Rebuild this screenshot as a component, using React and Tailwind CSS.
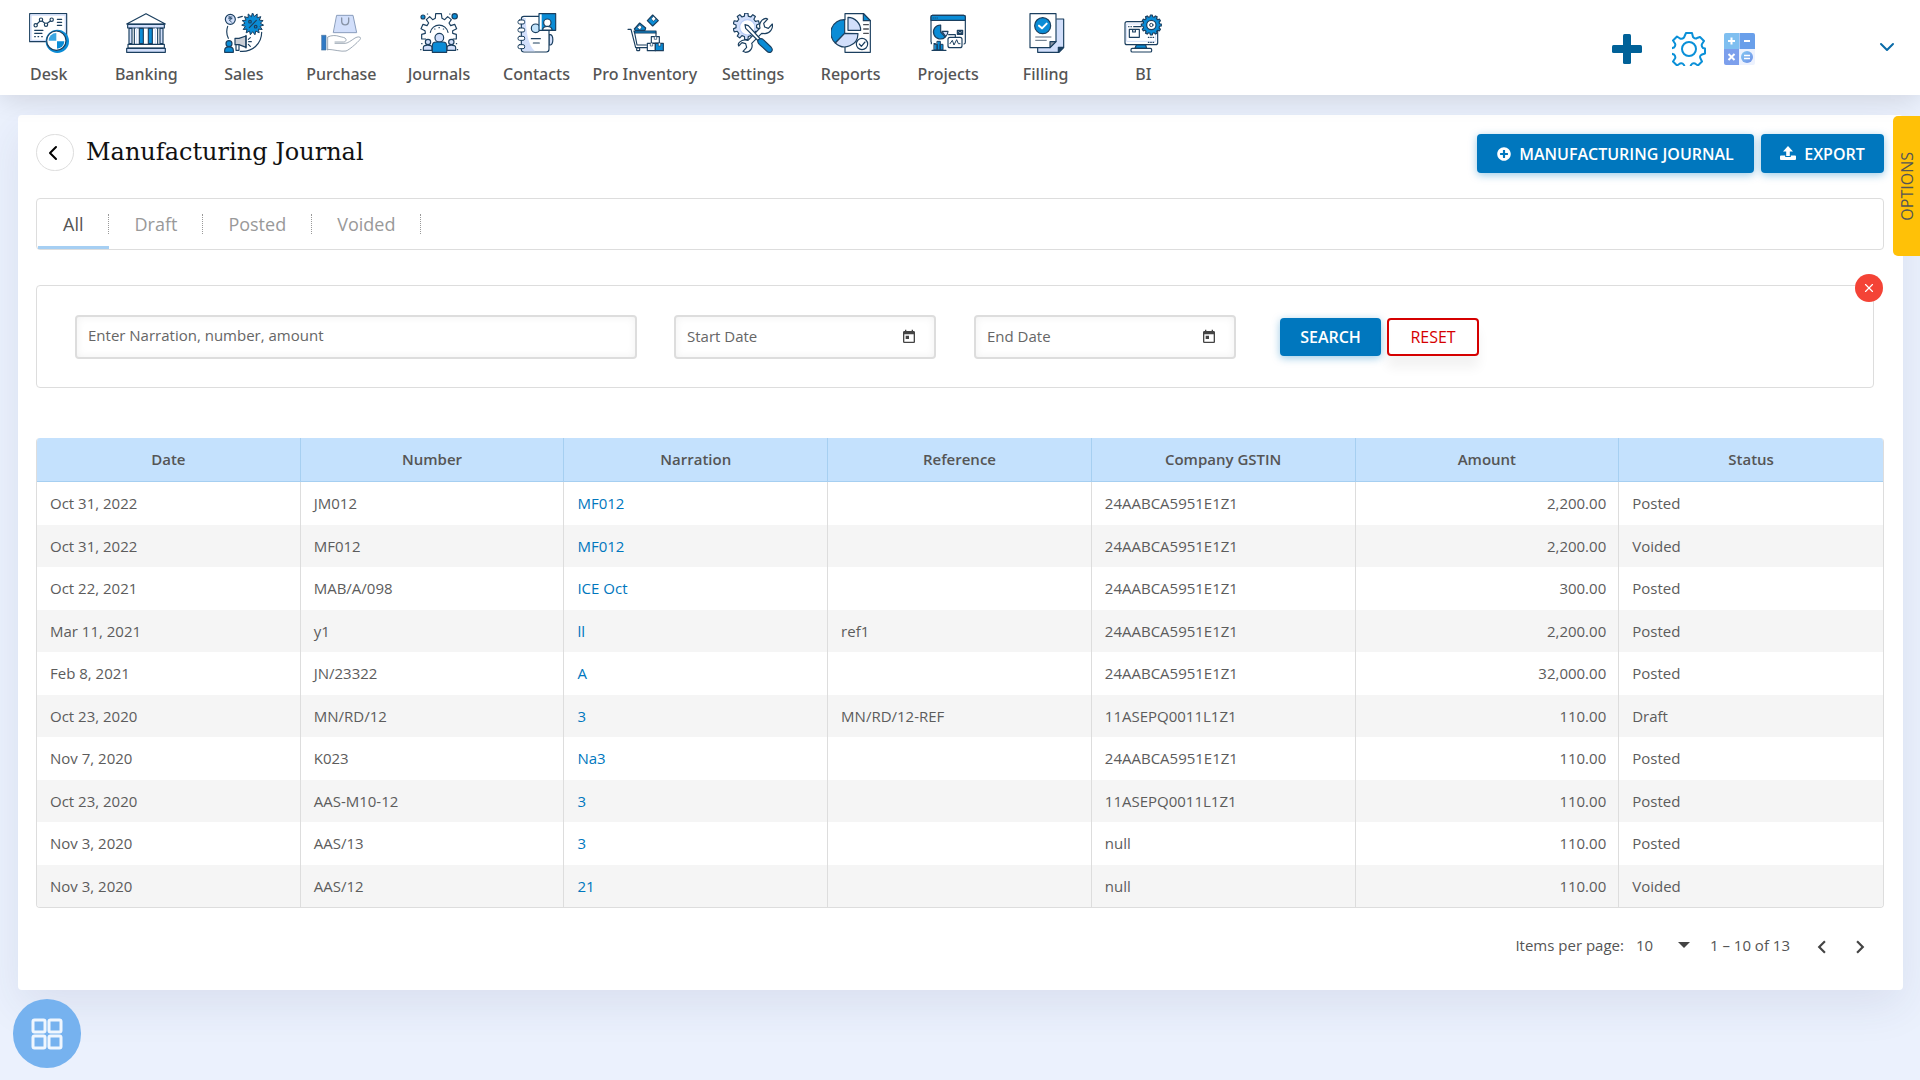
import React, { useState } from 'react';
import { ChevronDown, ChevronLeft, X } from 'lucide-react';
import { FaPlusCircle } from 'react-icons/fa';
import { MdChevronLeft, MdChevronRight, MdToday } from 'react-icons/md';

const NAVY = '#1b3f5f';
const BLUE = '#0a8cd6';
const LILAC = '#d2dffb';

// star with n spikes, used for the discount badge
const starPoints = (cx, cy, n, outer, inner) => {
  const pts = [];
  for (let i = 0; i < n * 2; i++) {
    const r = i % 2 === 0 ? outer : inner;
    const a = (Math.PI * i) / n - Math.PI / 2;
    pts.push(`${(cx + r * Math.cos(a)).toFixed(1)},${(cy + r * Math.sin(a)).toFixed(1)}`);
  }
  return pts.join(' ');
};

// cog outline with n flat teeth
const gearPoints = (cx, cy, n, outer, inner) => {
  const pts = [];
  const step = (Math.PI * 2) / n;
  for (let i = 0; i < n; i++) {
    const mid = i * step - Math.PI / 2;
    [[-0.3, inner], [-0.19, outer], [0.19, outer], [0.3, inner]].forEach(([k, r]) => {
      const a = mid + k * step;
      pts.push(`${(cx + r * Math.cos(a)).toFixed(1)},${(cy + r * Math.sin(a)).toFixed(1)}`);
    });
  }
  return pts.join(' ');
};

const NavIcon = ({ children }) => (
  <svg viewBox="0 0 120 120" className="w-10 h-10" fill="none" stroke={NAVY} strokeWidth="3.5" strokeLinejoin="round" strokeLinecap="round" aria-hidden="true">
    {children}
  </svg>
);

const DeskIcon = () => (
  <NavIcon>
    <rect x="2" y="2" width="111" height="84" fill="#fff" />
    <rect x="6" y="6" width="103" height="76" stroke={LILAC} strokeWidth="4" />
    <path d="M20 37l16-16 15 13 17-13" />
    <g fill="#fff">
      <circle cx="20" cy="37" r="5" />
      <circle cx="36" cy="20" r="5" />
      <circle cx="51" cy="35" r="5" />
      <circle cx="68" cy="20" r="5" />
    </g>
    <path d="M85 19h13M85 28h13M85 37h13M17 52h25M17 61h22M17 71h2M27 71h2M38 71h2" />
    <circle cx="85" cy="85" r="35" fill={BLUE} stroke="none" />
    <circle cx="82" cy="83" r="29" fill="#fff" />
    <path d="M82 83H59a23 23 0 0 1 23-23z" fill="#3aa6e2" stroke="none" />
    <path d="M84 85h22a22 22 0 0 1-22 22z" fill={BLUE} stroke="none" />
  </NavIcon>
);

const BankingIcon = () => (
  <NavIcon>
    <path d="M2 33L60 2l58 31z" fill="#fff" />
    <path d="M5 34h110v11H5z" fill={LILAC} />
    <path d="M9 46h9v46H9zM102 46h9v46h-9z" fill={LILAC} />
    <path d="M25 46v46M95 46v46" />
    <path d="M40 46h12v46H40zM67 46h12v46H67z" fill={BLUE} />
    <path d="M32 46v46M88 46v46" stroke={LILAC} />
    <path d="M6 94h109v11H6z" fill="#fff" />
    <path d="M2 106h116v12H2z" fill={LILAC} />
  </NavIcon>
);

const SalesIcon = () => (
  <NavIcon>
    <circle cx="19" cy="19" r="15" fill={LILAC} />
    <path d="M14 12h10M14 17h10M16 12c8 0 8 9 0 9l7 7" strokeWidth="2.5" />
    <path d="M42 14l13-4M11 40c-4 12-4 24 2 36M113 58c0 34-28 60-64 57" />
    <polygon points={starPoints(86, 33, 15, 33, 23)} fill={BLUE} strokeWidth="3" />
    <path d="M97 22L76 44" />
    <circle cx="78" cy="26" r="4" />
    <circle cx="95" cy="41" r="4" />
    <circle cx="15" cy="92" r="9" fill={BLUE} />
    <path d="M2 118v-6c0-14 26-14 26 0v6z" fill={BLUE} />
    <path d="M33 76h12l21-7v34l-21-8H33z" fill="#cbcfd6" />
    <path d="M66 67v38M36 95h9v17h-9z" fill="#fff" />
    <path d="M73 79l6-5M74 86h8M73 94l6 6" />
  </NavIcon>
);

const PurchaseIcon = () => (
  <NavIcon>
    <path d="M48 7h48l11 52H38z" fill={LILAC} stroke="#8a9dbc" strokeWidth="3" />
    <path d="M62 15v10c0 14 21 14 21 0V15" stroke="#8793a6" strokeWidth="4" />
    <path d="M2 67h13v44H2z" fill="#2f79c4" stroke="#41709f" strokeWidth="2" />
    <g stroke="#8d9aa8" strokeWidth="2.5">
      <path d="M20 111V72c12-6 26-5 34-2 8 3 19 2 21 9 1 5-3 8-8 8H42" />
      <path d="M42 91h30c8 0 18-8 30-16 8-5 17-4 17 1 0 4-32 34-44 38-14 3-38-5-55-5" />
    </g>
  </NavIcon>
);

const JournalsIcon = () => (
  <NavIcon>
    <path d="M20 78H8V64l11-3-1-8-12-6 6-13 12 4 5-8-7-10 10-9 9 9 8-4 1-14h17l2 14 8 4 9-9 11 9-7 10 5 8 12-4 6 13-12 6v8l11 3v14h-10" />
    <path d="M34 58a27 27 0 0 1 53 0" />
    <circle cx="12" cy="12" r="6" fill={BLUE} />
    <circle cx="107" cy="10" r="8" fill={BLUE} />
    <path d="M47 48h1M60 44h1M73 48h1M5 110h1M115 110h1M8 92h1M112 92h1M25 3h1M92 3h1" />
    <circle cx="27" cy="87" r="8" fill={LILAC} />
    <path d="M13 112v-8c0-10 26-10 26 0v8z" fill={LILAC} />
    <circle cx="97" cy="87" r="8" fill={LILAC} />
    <path d="M84 112v-8c0-10 26-10 26 0v8z" fill={LILAC} />
    <circle cx="61" cy="74" r="13" fill={LILAC} />
    <path d="M40 118v-20c0-8 5-11 12-11h19c7 0 12 3 12 11v20z" fill={BLUE} />
  </NavIcon>
);

const ContactsIcon = () => (
  <NavIcon>
    <path d="M96 65h4c10 2 10 28 0 31h-4z" fill={LILAC} />
    <path d="M13 18c0-5 3-8 8-8h67c4 0 8 3 8 8v91c0 5-4 8-8 8H21c-5 0-8-3-8-8z" fill="#fff" />
    <path d="M15 15h11c2 40 6 80 28 100H22c-4 0-7-3-7-7z" fill={LILAC} stroke="none" />
    <circle cx="56" cy="46" r="13" fill="#c3e4fb" />
    <path d="M66 2h50v50H66z" fill={BLUE} />
    <path d="M68 4h6v46h-6z" fill="#fff" stroke="none" />
    <circle cx="91" cy="29" r="11" fill="#fff" />
    <path d="M77 51c0-14 28-14 28 0z" fill="#fff" />
    <g fill="#fff" strokeWidth="3">
      <rect x="3" y="21" width="20" height="12" rx="5" />
      <rect x="3" y="45" width="20" height="12" rx="5" />
      <rect x="3" y="70" width="20" height="12" rx="5" />
      <rect x="3" y="95" width="20" height="12" rx="5" />
    </g>
    <path d="M43 77h27M49 90h18" />
  </NavIcon>
);

const InventoryIcon = () => (
  <NavIcon>
    <path d="M9 49h9l14 55h34" />
    <path d="M27 54h66v6H29z" fill={BLUE} />
    <path d="M29 60l7 36h28M93 60v10" />
    <path d="M83 6l17 17-17 16-16-16z" fill={BLUE} />
    <path d="M86 10l7 8-8 7-6-7z" fill="#fff" strokeWidth="2" />
    <path d="M31 52l-3-4 16-18 18 15-2 7z" fill={BLUE} />
    <path d="M37 43l7-7 7 6-6 8z" fill="#fff" strokeWidth="2" />
    <rect x="35" y="105" width="9" height="8" rx="2" fill="#fff" />
    <path d="M79 71h24v19H79zM67 91h24v22H67z" fill="#fff" />
    <path d="M91 91h24v22H91z" fill={BLUE} />
    <path d="M88 71v8h7v-8M76 91v8h7v-8M100 91v8h7v-8" fill="#fff" strokeWidth="2" />
  </NavIcon>
);

const SettingsIcon = () => (
  <NavIcon>
    <polygon points={gearPoints(40, 40, 10, 40, 31)} fill={LILAC} />
    <circle cx="43" cy="43" r="23" fill="#fff" stroke="#b9cdf7" />
    <path d="M19 88c7-7 17-9 26-6l36-37c-4-12 4-27 18-29l5 2-12 13 3 11 11 4 12-13c3 13-7 28-22 29l-10-1-30 30c5 12-4 27-19 27l-7-3 11-12-3-11-11-3-10 10c-2-4-1-8 2-11z" fill="#fff" />
    <path d="M36 35l10 3 36 40-6 6-38-38z" fill="#fff" />
    <path d="M76 80c5-4 11-4 15 0l23 22c5 6 5 11 1 14s-9 3-14-2L79 94c-4-4-6-10-3-14z" fill={BLUE} />
  </NavIcon>
);

const ReportsIcon = () => (
  <NavIcon>
    <path d="M42 2h56l20 21v95H42z" fill="#fff" />
    <path d="M97 2l21 21H97z" fill={BLUE} />
    <circle cx="41" cy="61" r="40" fill="#fff" stroke="none" />
    <path d="M41 61V20a40 40 0 0 0-28 70z" fill={BLUE} />
    <path d="M41 61L13 90a40 40 0 0 0 68-28z" fill={LILAC} />
    <path d="M51 52V13a39 39 0 0 1 38 39z" fill={LILAC} />
    <path d="M98 35h14M98 48h14M98 61h14" strokeWidth="4" stroke="#4c4f55" />
    <circle cx="93" cy="93" r="17" fill="#fff" />
    <path d="M85 93l6 7 11-13" />
  </NavIcon>
);

const ProjectsIcon = () => (
  <NavIcon>
    <path d="M9 86V12c0-3 1-5 4-5h94c3 0 5 2 5 5v76c0 3-1 5-4 5" />
    <path d="M9 22V12c0-3 1-5 4-5h94c3 0 5 2 5 5v10z" fill={BLUE} />
    <path d="M15 15h1M21 15h1M27 15h1" strokeWidth="3" />
    <path d="M38 57V36a21 21 0 1 0 14 36z" fill={BLUE} />
    <path d="M42 55h18c0 8-3 12-7 16z" fill={LILAC} />
    <path d="M62 65h20v9M10 88v4M18 92h4" />
    <path d="M88 52h16v12H88z" fill={NAVY} />
    <path d="M92 56l4 4 5-4" stroke="#fff" strokeWidth="1.5" />
    <rect x="60" y="73" width="42" height="31" rx="6" fill="#fff" />
    <path d="M66 92l7-10 5 14 8-16 5 12h5" strokeWidth="3" />
    <path d="M19 94h9v17h-9zM28 85h9v26h-9zM37 94h8v17h-8z" fill={BLUE} strokeWidth="3" />
    <path d="M12 112h42" />
  </NavIcon>
);

const FillingIcon = () => (
  <NavIcon>
    <path d="M92 18h21v86l-14 14H35v-12" fill={LILAC} />
    <path d="M97 118v-15h15z" fill={NAVY} />
    <path d="M12 2h78v84l-18 18H12z" fill="#fff" />
    <path d="M72 104V86h18z" fill="#8b95a3" />
    <circle cx="50" cy="38" r="24" fill={BLUE} />
    <path d="M39 38l9 8 14-14" stroke="#fff" strokeWidth="6" />
    <path d="M29 72h46M29 82h32" stroke="#5a6b7e" strokeWidth="3" />
  </NavIcon>
);

const BiIcon = () => (
  <NavIcon>
    <rect x="6" y="26" width="98" height="69" rx="6" fill="#fff" />
    <rect x="12" y="33" width="86" height="52" stroke={LILAC} strokeWidth="3" />
    <path d="M17 41h1M24 41h1M32 41h22M19 49h30v24H19zM29 49v8h8v-8" />
    <path d="M76 73h2M83 73h2M90 73h2M76 88h2M83 88h2M90 88h2" />
    <polygon points={gearPoints(85, 36, 12, 30, 25)} fill={BLUE} />
    <circle cx="85" cy="36" r="14" fill="#fff" />
    <circle cx="85" cy="36" r="5" strokeWidth="3" />
    <path d="M40 96h28l3 10H36z" fill={BLUE} />
    <rect x="24" y="106" width="62" height="11" rx="4" fill="#fff" />
  </NavIcon>
);

const navItems = [
  { label: 'Desk', icon: DeskIcon },
  { label: 'Banking', icon: BankingIcon },
  { label: 'Sales', icon: SalesIcon },
  { label: 'Purchase', icon: PurchaseIcon },
  { label: 'Journals', icon: JournalsIcon },
  { label: 'Contacts', icon: ContactsIcon },
  { label: 'Pro Inventory', icon: InventoryIcon, wide: true },
  { label: 'Settings', icon: SettingsIcon },
  { label: 'Reports', icon: ReportsIcon },
  { label: 'Projects', icon: ProjectsIcon },
  { label: 'Filling', icon: FillingIcon },
  { label: 'BI', icon: BiIcon },
];

const tabs = ['All', 'Draft', 'Posted', 'Voided'];

const columns = ['Date', 'Number', 'Narration', 'Reference', 'Company GSTIN', 'Amount', 'Status'];

const rows = [
  ['Oct 31, 2022', 'JM012', 'MF012', '', '24AABCA5951E1Z1', '2,200.00', 'Posted'],
  ['Oct 31, 2022', 'MF012', 'MF012', '', '24AABCA5951E1Z1', '2,200.00', 'Voided'],
  ['Oct 22, 2021', 'MAB/A/098', 'ICE Oct', '', '24AABCA5951E1Z1', '300.00', 'Posted'],
  ['Mar 11, 2021', 'y1', 'll', 'ref1', '24AABCA5951E1Z1', '2,200.00', 'Posted'],
  ['Feb 8, 2021', 'JN/23322', 'A', '', '24AABCA5951E1Z1', '32,000.00', 'Posted'],
  ['Oct 23, 2020', 'MN/RD/12', '3', 'MN/RD/12-REF', '11ASEPQ0011L1Z1', '110.00', 'Draft'],
  ['Nov 7, 2020', 'K023', 'Na3', '', '24AABCA5951E1Z1', '110.00', 'Posted'],
  ['Oct 23, 2020', 'AAS-M10-12', '3', '', '11ASEPQ0011L1Z1', '110.00', 'Posted'],
  ['Nov 3, 2020', 'AAS/13', '3', '', 'null', '110.00', 'Posted'],
  ['Nov 3, 2020', 'AAS/12', '21', '', 'null', '110.00', 'Voided'],
];

const PlusIcon = () => (
  <svg viewBox="0 0 30 30" className="h-[30px] w-[30px]" fill="currentColor" aria-hidden="true">
    <rect x="11" width="8" height="30" rx="1.5" />
    <rect y="11" width="30" height="8" rx="1.5" />
  </svg>
);

const GearIcon = () => (
  <svg viewBox="0 0 34 34" className="w-[34px] h-[34px]" fill="none" stroke="#0a90d8" strokeWidth="2" strokeLinejoin="round" aria-hidden="true">
    <path d="M14 1h6l1 4c1 1 3 2 4 1l3-1 4 4-2 3c-1 2 0 3 1 4l2 .5v5l-3 1c-2 1-2.500 2-1.500 4l1.500 3-4 4-3-2c-2-1-3 0-4 1.500l-1 3h-5l-1-3c-1-1.500-2-2.500-4-1.500l-3 2-4-4 2-3c1-2 0-3-1-4l-3-1v-5l3-1c1-1 2-2 1-4l-2-3 4-4 3 2c2 1 3 0 4-1z" />
    <circle cx="17" cy="17" r="7" />
  </svg>
);

const CalculatorIcon = () => (
  <svg viewBox="0 0 31 32" className="w-[31px] h-8" fill="none" stroke="#fff" strokeWidth="2" aria-hidden="true">
    <defs>
      <linearGradient id="calcFill" x1="0" y1="0" x2="1" y2="1">
        <stop offset="0" stopColor="#84c8f2" />
        <stop offset="1" stopColor="#6f8fe8" />
      </linearGradient>
    </defs>
    <rect width="31" height="32" rx="2" fill="#edf2fe" stroke="none" />
    <path d="M2 0h13v16H0V2a2 2 0 0 1 2-2z" fill="#7fbff0" stroke="none" />
    <path d="M15.500 0H29a2 2 0 0 1 2 2v14H15.500z" fill="#699fea" stroke="none" />
    <path d="M0 16h15v16H2a2 2 0 0 1-2-2z" fill="#7c9fec" stroke="none" />
    <circle cx="23" cy="24" r="6" fill="url(#calcFill)" stroke="none" />
    <path d="M4 8h7M7.500 4.500v7M20 8h6M4.500 21l6 6M10.500 21l-6 6" />
    <path d="M20 22.500h6M20 25.500h6" strokeWidth="1.5" />
  </svg>
);

const UploadIcon = () => (
  <svg viewBox="0 0 16 15" className="w-4 h-[15px]" fill="currentColor" aria-hidden="true">
    <path d="M8 0l5 5.500H9.800V10H6.200V5.500H3z" />
    <path d="M1 9.500h4.200V11h5.600V9.500H15a1 1 0 0 1 1 1V13a1 1 0 0 1-1 1H1a1 1 0 0 1-1-1v-2.500a1 1 0 0 1 1-1z" />
  </svg>
);

const Header = () => (
  <header className="relative z-10 flex h-[95px] items-start bg-white shadow-[0_4px_24px_rgba(0,0,0,0.12)]">
    <nav className="flex w-[1192px] shrink-0 pt-[13px]">
      {navItems.map(({ label, icon: Icon, wide }) => (
        <a
          key={label}
          href="#"
          className={`flex flex-col items-center gap-[9px] whitespace-nowrap font-['Noto_Sans',sans-serif] text-base font-medium text-[#555] ${wide ? 'w-[119px] shrink-0' : 'flex-1'}`}
        >
          <Icon />
          {label}
        </a>
      ))}
    </nav>
    <div className="ml-auto flex items-center pt-8 pr-[21px]">
      <button type="button" aria-label="Add" className="text-[#006198]">
        <PlusIcon />
      </button>
      <button type="button" aria-label="Preferences" className="ml-[30px]">
        <GearIcon />
      </button>
      <button type="button" aria-label="Calculator" className="ml-[18px]">
        <CalculatorIcon />
      </button>
      <button type="button" aria-label="Account" className="ml-[120px] pb-1 text-[#0a6ba8]">
        <ChevronDown className="h-6 w-6" strokeWidth={2} />
      </button>
    </div>
  </header>
);

const DateField = ({ id, placeholder }) => (
  <div className="flex h-11 w-[262px] items-center rounded border-2 border-[#ddd] pl-[11px] pr-[17px] shadow-[inset_0_0_8px_rgba(0,0,0,0.06)]">
    <input id={id} type="text" aria-label={placeholder} placeholder={placeholder} className="min-w-0 flex-1 bg-transparent text-[15px] outline-none placeholder:text-[#666]" />
    <button type="button" aria-label={`Choose ${placeholder}`}>
      <MdToday className="h-4 w-4 text-[#444]" />
    </button>
  </div>
);

const App = () => {
  const [activeTab, setActiveTab] = useState('All');
  const [pageSize, setPageSize] = useState('10');

  return (
    <div className="min-h-screen bg-[#ebf1fd] font-['Open_Sans',sans-serif] text-[15px] text-[#555]">
      <Header />

      <main className="mt-5 mr-[17px] ml-[18px] rounded bg-white pt-[19px] pr-[19px] pb-6 pl-[18px] shadow-[0_16px_44px_rgba(40,60,100,0.09)]">
        <div className="flex items-start">
          <button type="button" aria-label="Back" className="flex h-[37px] w-[38px] items-center justify-center rounded-full border border-[#ddd] text-black">
            <ChevronLeft className="mr-1 h-6 w-6" strokeWidth={2} />
          </button>
          <h1 className="ml-3 font-['DejaVu_Serif',serif] text-2xl leading-9 text-[#111]">Manufacturing Journal</h1>
          <div className="ml-auto flex gap-[7px] text-base font-semibold text-white">
            <button type="button" className="flex h-[39px] w-[277px] items-center justify-center gap-2 rounded bg-[#0077be] shadow-[0_2px_8px_rgba(0,119,190,0.4)]">
              <FaPlusCircle className="h-[14px] w-[14px]" />
              MANUFACTURING JOURNAL
            </button>
            <button type="button" className="flex h-[39px] w-[123px] items-center justify-center gap-2 rounded bg-[#0077be] shadow-[0_2px_8px_rgba(0,119,190,0.4)]">
              <UploadIcon />
              EXPORT
            </button>
          </div>
        </div>

        <div role="tablist" className="mt-[25px] flex h-[52px] rounded border border-[#ddd] pl-px text-lg font-medium">
          {tabs.map((tab) => (
            <button
              key={tab}
              type="button"
              role="tab"
              aria-selected={activeTab === tab}
              onClick={() => setActiveTab(tab)}
              className={`flex items-center border-b-[3px] pt-[3px] ${activeTab === tab ? 'border-[#a6cff3] text-[#555]' : 'border-transparent text-[#999]'}`}
            >
              <span className="border-r border-dotted border-[#999] px-[25px] leading-5">{tab}</span>
            </button>
          ))}
        </div>

        <form className="relative mt-[35px] mr-[10px] flex h-[103px] items-center rounded border border-[#ddd] pl-[38px]" onSubmit={(e) => e.preventDefault()}>
          <input
            type="text"
            aria-label="Enter Narration, number, amount"
            placeholder="Enter Narration, number, amount"
            className="h-11 w-[562px] rounded border-2 border-[#ddd] px-[11px] pb-1 text-[15px] shadow-[inset_0_0_8px_rgba(0,0,0,0.06)] outline-none placeholder:text-[#666]"
          />
          <div className="ml-[37px] flex gap-[38px]">
            <DateField id="startDate" placeholder="Start Date" />
            <DateField id="endDate" placeholder="End Date" />
          </div>
          <button type="submit" className="ml-11 h-[38px] w-[101px] rounded bg-[#0077be] text-base font-semibold text-white shadow-[0_2px_8px_rgba(0,119,190,0.4)]">
            SEARCH
          </button>
          <button type="reset" className="ml-1.5 h-[38px] w-[92px] rounded border-2 border-[#d50000] text-base font-medium text-[#d50000] shadow-[0_12px_12px_rgba(0,0,0,0.05)]">
            RESET
          </button>
          <button type="button" aria-label="Close filters" className="absolute -top-3 -right-[10px] flex h-7 w-7 items-center justify-center rounded-full bg-[#f44336] text-white">
            <X className="h-[14px] w-[14px]" strokeWidth={2} />
          </button>
        </form>

        <div className="mt-[50px] overflow-hidden rounded border border-t-0 border-[#ddd]">
          <table className="w-full table-fixed border-separate border-spacing-0">
            <thead>
              <tr className="h-11 bg-[#c4e1fd]">
                {columns.map((col) => (
                  <th key={col} className="border-r border-b border-[#a6cff1] text-center font-semibold last:border-r-0">{col}</th>
                ))}
              </tr>
            </thead>
            <tbody>
              {rows.map((row, i) => (
                <tr key={i} className="even:bg-[#f5f5f5]">
                  {row.map((cell, j) => (
                    <td key={j} className={`border-r border-[#ddd] py-[10px] pr-3 pl-[13px] leading-normal text-[#5c5c5c] last:border-r-0 ${j === 5 ? 'text-right' : ''}`}>
                      {j === 2 ? <a href="#" className="text-[#0077be]">{cell}</a> : cell}
                    </td>
                  ))}
                </tr>
              ))}
            </tbody>
          </table>
        </div>

        <div className="mt-5 flex h-[38px] items-center justify-end">
          <div className="flex items-center pb-1">
            <label htmlFor="pageSize">Items per page:</label>
            <div className="relative ml-3 flex items-center">
              <select
                id="pageSize"
                value={pageSize}
                onChange={(e) => setPageSize(e.target.value)}
                className="w-[54px] appearance-none bg-transparent outline-none"
              >
                <option>10</option>
                <option>25</option>
                <option>50</option>
              </select>
              <svg viewBox="0 0 12 6" className="pointer-events-none absolute right-0 h-1.5 w-3" fill="#444" aria-hidden="true">
                <path d="M0 0h12L6 6z" />
              </svg>
            </div>
            <span className="mr-[19px] ml-5">1 – 10 of 13</span>
          </div>
          <button type="button" aria-label="Previous page" className="text-[#444]">
            <MdChevronLeft className="h-[26px] w-[26px]" />
          </button>
          <button type="button" aria-label="Next page" className="mr-[11px] ml-3 text-[#444]">
            <MdChevronRight className="h-[26px] w-[26px]" />
          </button>
        </div>
      </main>

      <button type="button" className="fixed top-[116px] right-0 z-20 flex h-[140px] w-[27px] items-center justify-center rounded-l-[5px] bg-[#ffc107] text-base">
        <span className="rotate-180 [writing-mode:vertical-rl]">OPTIONS</span>
      </button>

      <button type="button" aria-label="Apps" className="fixed bottom-3 left-[13px] z-20 flex h-[69px] w-[68px] items-center justify-center rounded-full bg-[#76b2ef]">
        <svg viewBox="0 0 32 32" className="h-8 w-8" fill="none" stroke="#eff6fe" strokeWidth="3" aria-hidden="true">
          <rect x="2" y="2" width="12" height="12" rx="1.500" />
          <rect x="18" y="2" width="12" height="12" rx="1.500" />
          <rect x="2" y="18" width="12" height="12" rx="1.500" />
          <rect x="18" y="18" width="12" height="12" rx="1.500" />
        </svg>
      </button>
    </div>
  );
};

export default App;
